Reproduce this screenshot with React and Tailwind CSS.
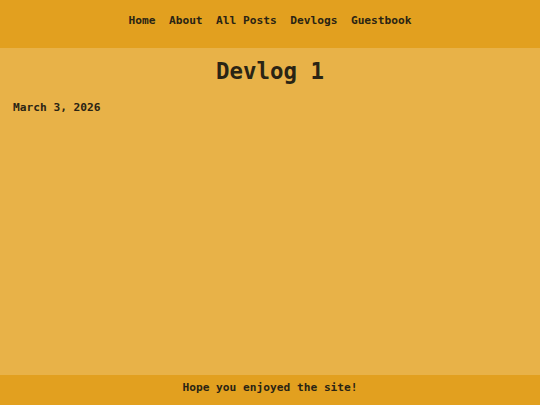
const navLinks = ['Home', 'About', 'All Posts', 'Devlogs', 'Guestbook'];

const App = () => (
  <div
    className="min-h-screen flex flex-col bg-[#e8b248] text-[#2a2414] font-bold"
    style={{ fontFamily: '"DejaVu Sans Mono", "Liberation Mono", monospace' }}
  >
    <header className="h-12 bg-[#e2a01f] flex justify-center pt-[12px]">
      <nav className="flex gap-[13.5px] text-[11.2px] leading-[18px] h-[18px]">
        {navLinks.map((link) => (
          <a key={link} href="#" className="hover:underline">
            {link}
          </a>
        ))}
      </nav>
    </header>
    <main className="flex-1 px-[13px]">
      <h1 className="text-center text-[22.4px] leading-[28px] mt-[9px]">Devlog 1</h1>
      <p className="text-[11.2px] leading-[18px] mt-[14px]">March 3, 2026</p>
    </main>
    <footer className="h-[30px] bg-[#e2a01f] flex items-center justify-center text-[11.2px] pb-[4px]">
      Hope you enjoyed the site!
    </footer>
  </div>
);

export default App;
